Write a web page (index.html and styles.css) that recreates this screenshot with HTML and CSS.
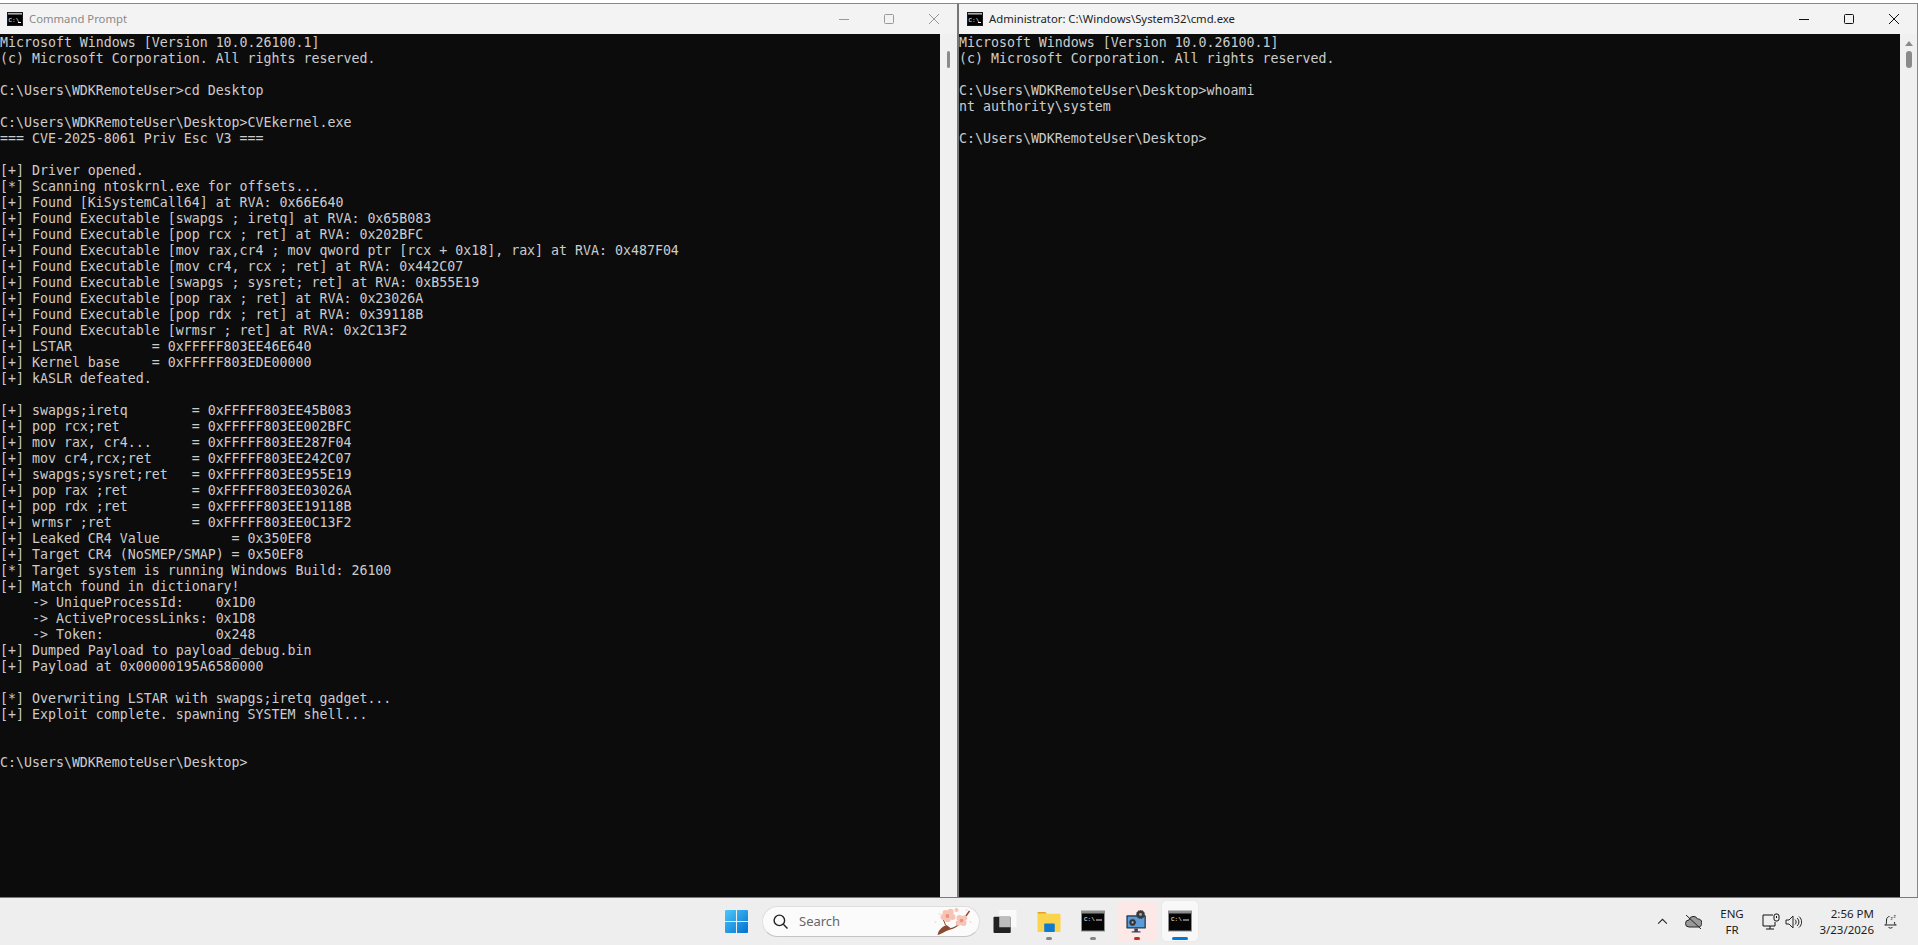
FILE: index.html
```html
<!DOCTYPE html>
<html lang="en">
<head>
<meta charset="utf-8">
<title>Command Prompt</title>
<link rel="stylesheet" href="styles.css">
</head>
<body>
<main class="desktop">
  <section class="window window-left">
    <header class="titlebar inactive">
      <svg class="app-icon" viewBox="0 0 16 14"><rect width="16" height="14" fill="#1a1a1a"/><rect x="1" y="1" width="14" height="1.5" fill="#aaa"/><rect x="1" y="3" width="14" height="10" fill="#000"/><text x="1.5" y="10" class="icon-text">C:\</text><rect x="11" y="10" width="3" height="1" fill="#fff"/></svg>
      <span class="title">Command Prompt</span>
      <div class="controls">
        <svg class="ctl" viewBox="0 0 10 10"><path d="M0 5.5h10"/></svg>
        <svg class="ctl" viewBox="0 0 10 10"><rect x=".5" y=".5" width="9" height="9" rx="1"/></svg>
        <svg class="ctl" viewBox="0 0 10 10"><path d="M0 0l10 10M10 0L0 10"/></svg>
      </div>
    </header>
    <div class="body">
<pre class="console">Microsoft Windows [Version 10.0.26100.1]
(c) Microsoft Corporation. All rights reserved.

C:\Users\WDKRemoteUser&gt;cd Desktop

C:\Users\WDKRemoteUser\Desktop&gt;CVEkernel.exe
=== CVE-2025-8061 Priv Esc V3 ===

[+] Driver opened.
[*] Scanning ntoskrnl.exe for offsets...
[+] Found [KiSystemCall64] at RVA: 0x66E640
[+] Found Executable [swapgs ; iretq] at RVA: 0x65B083
[+] Found Executable [pop rcx ; ret] at RVA: 0x202BFC
[+] Found Executable [mov rax,cr4 ; mov qword ptr [rcx + 0x18], rax] at RVA: 0x487F04
[+] Found Executable [mov cr4, rcx ; ret] at RVA: 0x442C07
[+] Found Executable [swapgs ; sysret; ret] at RVA: 0xB55E19
[+] Found Executable [pop rax ; ret] at RVA: 0x23026A
[+] Found Executable [pop rdx ; ret] at RVA: 0x39118B
[+] Found Executable [wrmsr ; ret] at RVA: 0x2C13F2
[+] LSTAR          = 0xFFFFF803EE46E640
[+] Kernel base    = 0xFFFFF803EDE00000
[+] kASLR defeated.

[+] swapgs;iretq        = 0xFFFFF803EE45B083
[+] pop rcx;ret         = 0xFFFFF803EE002BFC
[+] mov rax, cr4...     = 0xFFFFF803EE287F04
[+] mov cr4,rcx;ret     = 0xFFFFF803EE242C07
[+] swapgs;sysret;ret   = 0xFFFFF803EE955E19
[+] pop rax ;ret        = 0xFFFFF803EE03026A
[+] pop rdx ;ret        = 0xFFFFF803EE19118B
[+] wrmsr ;ret          = 0xFFFFF803EE0C13F2
[+] Leaked CR4 Value         = 0x350EF8
[+] Target CR4 (NoSMEP/SMAP) = 0x50EF8
[*] Target system is running Windows Build: 26100
[+] Match found in dictionary!
    -&gt; UniqueProcessId:    0x1D0
    -&gt; ActiveProcessLinks: 0x1D8
    -&gt; Token:              0x248
[+] Dumped Payload to payload_debug.bin
[+] Payload at 0x00000195A6580000

[*] Overwriting LSTAR with swapgs;iretq gadget...
[+] Exploit complete. spawning SYSTEM shell...


C:\Users\WDKRemoteUser\Desktop&gt;</pre>
      <div class="scrollbar scrollbar-left"><span class="thumb thumb-left"></span></div>
    </div>
  </section>
  <section class="window window-right">
    <header class="titlebar">
      <svg class="app-icon" viewBox="0 0 16 14"><rect width="16" height="14" fill="#1a1a1a"/><rect x="1" y="1" width="14" height="1.5" fill="#aaa"/><rect x="1" y="3" width="14" height="10" fill="#000"/><text x="1.5" y="10" class="icon-text">C:\</text><rect x="11" y="10" width="3" height="1" fill="#fff"/></svg>
      <span class="title">Administrator: C:\Windows\System32\cmd.exe</span>
      <div class="controls">
        <svg class="ctl" viewBox="0 0 10 10"><path d="M0 5.5h10"/></svg>
        <svg class="ctl" viewBox="0 0 10 10"><rect x=".5" y=".5" width="9" height="9" rx="1"/></svg>
        <svg class="ctl" viewBox="0 0 10 10"><path d="M0 0l10 10M10 0L0 10"/></svg>
      </div>
    </header>
    <div class="body">
<pre class="console">Microsoft Windows [Version 10.0.26100.1]
(c) Microsoft Corporation. All rights reserved.

C:\Users\WDKRemoteUser\Desktop&gt;whoami
nt authority\system

C:\Users\WDKRemoteUser\Desktop&gt;</pre>
      <div class="scrollbar scrollbar-right">
        <svg class="arrow" viewBox="0 0 8 5"><path d="M4 0l4 5H0z"/></svg>
        <span class="thumb thumb-right"></span>
      </div>
    </div>
  </section>
</main>
<footer class="taskbar">
  <div class="side"></div>
  <div class="center">
    <svg class="win" viewBox="0 0 22 22">
      <defs><linearGradient id="w" x1="0" y1="0" x2="1" y2="1"><stop offset="0" stop-color="#4cc8fb"/><stop offset="1" stop-color="#0070d0"/></linearGradient></defs>
      <path fill="url(#w)" d="M0 1a1 1 0 0 1 1-1h9.500v10.500H0zM11.500 0H21a1 1 0 0 1 1 1v9.500H11.500zM0 11.500h10.500V22H1a1 1 0 0 1-1-1zM11.500 11.500H22V21a1 1 0 0 1-1 1h-9.500z"/>
    </svg>
    <div class="search">
      <svg class="lens" viewBox="0 0 16 16"><circle cx="6.800" cy="6.800" r="5.600"/><path d="M11 11l4.500 4.500"/></svg>
      <span class="search-label">Search</span>
      <svg class="blossom" viewBox="0 0 40 28">
        <path d="M6 27C10 25 13 23 17 22 25 21 30 14 37 4" fill="none" stroke="#8a4a32" stroke-width="1.400"/>
        <path d="M5 28c1-5 4-8 9-10l4 3-8 5z" fill="#8a4a32"/>
        <path d="M13 18l-2-5" stroke="#8a4a32" fill="none"/>
        <g fill="#f7c4b4">
          <circle cx="13" cy="6" r="3"/><circle cx="18" cy="5" r="3.200"/><circle cx="20" cy="10" r="3"/><circle cx="15" cy="12" r="3.200"/><circle cx="11" cy="10" r="3"/>
          <circle cx="27" cy="11" r="3"/><circle cx="32" cy="11" r="2.800"/><circle cx="31" cy="16" r="3"/><circle cx="26" cy="16" r="2.800"/>
          <circle cx="24" cy="3" r="2"/>
        </g>
        <circle cx="15" cy="9" r="2" fill="#e8917e"/><circle cx="29" cy="13.500" r="1.800" fill="#e8917e"/>
        <circle cx="3" cy="15" r="1" fill="#fbdcd4"/><circle cx="38" cy="15" r="1" fill="#fbdcd4"/><circle cx="7" cy="7" r="1" fill="#fbdcd4"/><circle cx="34" cy="3" r="1" fill="#fbdcd4"/>
      </svg>
    </div>
    <div class="tile tile-view">
      <svg class="icon" viewBox="0 0 24 24">
        <rect x="6" y="0" width="18" height="18" rx="1" fill="#fafafa"/>
        <rect x="0" y="7" width="18" height="17" rx="1" fill="#222"/>
        <rect x="6" y="7" width="12" height="11" fill="#bdbdbd"/>
      </svg>
    </div>
    <div class="tile">
      <svg class="icon" viewBox="0 0 24 24">
        <path d="M0 3a1 1 0 0 1 1-1h7l2 2h-10z" fill="#e0a020"/>
        <rect x="0" y="4" width="24" height="19" rx="1" fill="#fcd34d"/>
        <rect x="7" y="14" width="11" height="9" rx="1" fill="#1079d0"/>
      </svg>
      <i class="dot dot-gray"></i>
    </div>
    <div class="tile">
      <svg class="icon" viewBox="0 0 24 22"><rect width="24" height="21" fill="#8d8d8d"/><rect x="1" y="3" width="22" height="17" fill="#050505"/><text x="3" y="10" class="icon-text">C:\</text><rect x="15" y="9" width="6" height="1" fill="#ddd"/></svg>
      <i class="dot dot-gray"></i>
    </div>
    <div class="tile tile-alert">
      <svg class="icon" viewBox="0 0 24 26">
        <rect x="0" y="6" width="22" height="15" rx="1" fill="#263a52"/>
        <rect x="1.500" y="7.500" width="19" height="12" fill="#5b9bd8"/>
        <path d="M9 21h4v3h-4zM6 24h10v1.500H6z" fill="#3a4654"/>
        <circle cx="7" cy="14" r="3.500" fill="#333" stroke="#444" stroke-dasharray="1.500 1"/><circle cx="7" cy="14" r="1.200" fill="#9cc4ea"/>
        <circle cx="16" cy="5" r="4.500" fill="#3a3a3a" stroke="#333" stroke-dasharray="1.500 1"/><circle cx="16" cy="5" r="1.600" fill="#aaa"/>
      </svg>
      <i class="dot dot-red"></i>
    </div>
    <div class="tile tile-active">
      <svg class="icon" viewBox="0 0 24 22"><rect width="24" height="21" fill="#8d8d8d"/><rect x="1" y="3" width="22" height="17" fill="#050505"/><text x="3" y="10" class="icon-text">C:\</text><rect x="15" y="9" width="6" height="1" fill="#ddd"/></svg>
      <i class="dot dot-blue"></i>
    </div>
  </div>
  <div class="side tray">
    <svg class="chevron" viewBox="0 0 12 8"><path d="M1 6.500l5-5 5 5"/></svg>
    <svg class="cloud" viewBox="0 0 17 14"><path d="M4 12a3.500 3.500 0 0 1 0-7 4.500 4.500 0 0 1 8.500-1A3.800 3.800 0 0 1 13 12z" fill="#9a9a9a" stroke="#222"/><path d="M1 0l15 14" stroke="#222" fill="none"/></svg>
    <div class="lang"><span>ENG</span><span>FR</span></div>
    <svg class="net" viewBox="0 0 18 17"><path d="M11 2H1v11h12V9M4 16h8M8 13v3" fill="none" stroke="#111"/><rect x="12" y="1" width="5" height="7" rx="2" fill="none" stroke="#111"/><path d="M14.500 3v2" stroke="#111"/></svg>
    <svg class="vol" viewBox="0 0 17 14"><path d="M1 5h3l4-4v12l-4-4H1zM10 4.500c1.500 1.500 1.500 3.500 0 5M12 3c2.500 2.200 2.500 5.800 0 8M14 1.500c3.500 3 3.500 8 0 11" fill="none" stroke="#222"/></svg>
    <div class="clock"><span>2:56 PM</span><span>3/23/2026</span></div>
    <svg class="bell" viewBox="0 0 14 15"><path d="M2 11c1-1 1-2 1-5 0-2 1.500-3.500 3-3.500M12 11c-.5-.5-1-1-1-3M1 11h12M5 13c.5 1.500 3.500 1.500 4 0" fill="none" stroke="#222"/><text x="7" y="6" class="zz">z</text><text x="10" y="3.500" class="zz">z</text></svg>
  </div>
</footer>
</body>
</html>
```

FILE: styles.css
```css
* { box-sizing: border-box; }
html, body { margin: 0; height: 100%; overflow: hidden; background: #f2f2f2; }
body { display: flex; flex-direction: column; width: 1918px; height: 945px; }
.desktop { display: flex; flex: none; height: 898px; padding-top: 3px; background: #fff; border-bottom: 1px solid #7a7a7a; }
.window { display: flex; flex-direction: column; border-top: 1px solid #888; }
.window-left { width: 957px; }
.window-right { width: 961px; border-left: 2px solid #777; border-right: 1px solid #888; }
.titlebar { display: flex; align-items: center; height: 30px; flex: none; padding-left: 7px; background: #f3f3f3; }
.window-right .titlebar { padding-left: 8px; }
.app-icon { width: 16px; height: 14px; flex: none; margin-right: 6px; }
.icon-text { font: 6px "Liberation Mono", monospace; fill: #fff; }
.title { font: 11.300px/16px "Noto Sans", sans-serif; color: #222; }
.inactive .title { color: #8a8a8a; }
.controls { display: flex; align-items: center; gap: 35px; margin-left: auto; padding-right: 18px; }
.ctl { width: 10px; height: 10px; fill: none; stroke: #111; stroke-width: 1; }
.inactive .ctl { stroke: #999; }
.body { display: flex; flex: 1; min-height: 0; }
.console { flex: 1; margin: 0; padding-top: 1px; background: #0c0c0c; color: #cccccc; font: 13.28px/16px "DejaVu Sans Mono", monospace; overflow: hidden; white-space: pre; }
.scrollbar { display: flex; flex-direction: column; align-items: center; flex: none; background: #f0f0f0; }
.scrollbar-left { width: 17px; }
.scrollbar-right { width: 17px; }
.thumb { display: block; background: #8a8a8a; border-radius: 2px; }
.thumb-left { width: 3px; height: 17px; margin-top: 17px; }
.arrow { width: 8px; height: 5px; margin-top: 7px; fill: #8a8a8a; }
.thumb-right { width: 6px; height: 17px; margin-top: 5px; border-radius: 3px; }
.taskbar { display: flex; align-items: stretch; flex: none; height: 47px; background: #eeeeee; }
.side { flex: 1 1 0; min-width: 0; }
.center { display: flex; align-items: center; flex: none; align-self: flex-start; padding: 3px 0 0 5px; }
.win { width: 23px; height: 23px; flex: none; margin-right: 14px; }
.search { display: flex; align-items: center; width: 218px; height: 31px; flex: none; padding: 0 3px 0 10px; background: #fbfbfb; border: 1px solid #dedede; border-bottom-color: #c4c4c4; border-radius: 16px; }
.lens { width: 15px; height: 15px; flex: none; fill: none; stroke: #222; stroke-width: 1.500; }
.search-label { margin-left: 11px; font: 13px/16px "Noto Sans", sans-serif; color: #666; }
.blossom { width: 41px; height: 28px; margin-left: auto; margin-right: 3px; }
.tile { position: relative; display: flex; align-items: center; justify-content: center; width: 44px; height: 40px; flex: none; border-radius: 4px; }
.tile-view { margin-left: 3px; }
.tile-alert { background: #fde8e8; width: 40px; margin-left: 2px; }
.tile-active { background: #f8f8f8; width: 36px; margin-left: 5px; box-shadow: 0 0 1px #ccc; }
.icon { width: 24px; height: 23px; }
.dot { position: absolute; left: 50%; bottom: 1px; width: 6px; height: 3px; margin-left: -3px; border-radius: 2px; }
.dot-gray { background: #858585; }
.dot-red { background: #c42b1c; }
.dot-blue { background: #0078d4; width: 16px; margin-left: -8px; }
.tray { display: flex; align-items: center; justify-content: flex-end; color: #1c1c1c; font: 11.500px/16px "Noto Sans", sans-serif; }
.chevron { width: 11px; height: 7px; flex: none; fill: none; stroke: #222; stroke-width: 1.200; }
.cloud { width: 17px; height: 14px; flex: none; margin-left: 17px; }
.lang { display: flex; flex-direction: column; align-items: center; width: 30px; margin-left: 15px; }
.net { width: 18px; height: 17px; flex: none; margin-left: 15px; }
.vol { width: 17px; height: 14px; flex: none; margin-left: 5px; }
.clock { display: flex; flex-direction: column; align-items: flex-end; width: 72px; }
.bell { width: 15px; height: 15px; flex: none; margin-left: 9px; margin-right: 20px; }
.zz { font: 5px "Noto Sans", sans-serif; fill: #222; }
```
